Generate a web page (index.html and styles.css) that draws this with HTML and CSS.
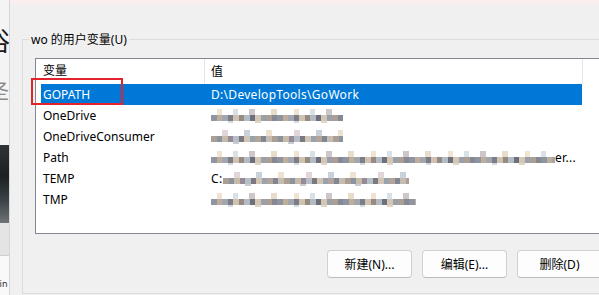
FILE: index.html
```html
<!DOCTYPE html>
<html lang="zh-CN">
<head>
  <meta charset="UTF-8">
  <title>环境变量</title>
  <link rel="stylesheet" href="styles.css">
</head>
<body>
  <div class="screen">

    <aside class="behind">
      <div class="behind-top">
        <span class="behind-big">俗</span>
        <span class="behind-gray">圣</span>
      </div>
      <div class="behind-photo"></div>
      <div class="behind-bar"></div>
      <div class="behind-foot">nin</div>
    </aside>

    <main class="dialog">
      <fieldset class="group">
        <legend>wo 的用户变量(U)</legend>

        <div class="list">
          <div class="list-head">
            <div class="col-name">变量</div>
            <div class="col-value">值</div>
          </div>

          <div class="row selected">
            <div class="col-name">GOPATH</div>
            <div class="col-value">D:\DevelopTools\GoWork</div>
          </div>
          <div class="row">
            <div class="col-name">OneDrive</div>
            <div class="col-value"><span class="mosaic m-short"></span></div>
          </div>
          <div class="row">
            <div class="col-name">OneDriveConsumer</div>
            <div class="col-value"><span class="mosaic m-short alt"></span></div>
          </div>
          <div class="row">
            <div class="col-name">Path</div>
            <div class="col-value"><span class="mosaic m-long"></span>er...</div>
          </div>
          <div class="row">
            <div class="col-name">TEMP</div>
            <div class="col-value">C:<span class="mosaic m-temp alt"></span></div>
          </div>
          <div class="row">
            <div class="col-name">TMP</div>
            <div class="col-value"><span class="mosaic m-tmp"></span></div>
          </div>
        </div>

        <div class="actions">
          <button class="btn">新建(N)...</button>
          <button class="btn">编辑(E)...</button>
          <button class="btn">删除(D)</button>
        </div>
      </fieldset>

      <!-- 红框标注 -->
      <div class="callout"></div>
    </main>

  </div>
</body>
</html>
```

FILE: styles.css
```css
body {
  margin: 0;
  width: 599px;
  height: 295px;
  overflow: hidden;
  font-family: "Noto Sans", "Noto Sans CJK SC", sans-serif;
  font-size: 12px;
  color: #000;
}

.screen {
  display: flex;
  height: 295px;
}

/* window behind the dialog */
.behind {
  width: 9px;
  flex-shrink: 0;
  border-right: 1px solid #d6d6d6;
  background-color: #f4f4f4;
  overflow: hidden;
  display: flex;
  flex-direction: column;
}

.behind-top {
  height: 145px;
}

.behind-big {
  display: block;
  margin: 26px 0 0 -16px;
  font-size: 26px;
  line-height: 30px;
  color: #1a1a1a;
}

.behind-gray {
  display: block;
  margin: 24px 0 0 -11px;
  font-size: 20px;
  line-height: 24px;
  color: #8a8a8a;
}

.behind-photo {
  height: 78px;
  background: linear-gradient(180deg, #2f3438 0%, #1b1f22 40%, #3b4146 70%, #6f7377 100%);
}

.behind-bar {
  height: 32px;
  background-color: #e4e4e4;
  border-bottom: 1px solid #cfcfcf;
}

.behind-foot {
  flex: 1;
  background-color: #f9f9f9;
  font-size: 9px;
  line-height: 12px;
  padding-top: 22px;
  margin-left: -6px;
  color: #333;
}

/* dialog */
.dialog {
  flex: 1;
  position: relative;
  background-color: #f0f0f0;
  border-top: 4px solid #fbeeee;
  padding: 27px 0 0 12px;
  overflow: hidden;
}

.group {
  width: 620px;
  margin: 0;
  padding: 0 0 15px 12px;
  border: 1px solid #dcdcdc;
  border-right: none;
}

.group legend {
  padding: 0 2px;
  margin-left: -6px;
  line-height: 17px;
}

.list {
  margin-top: 10px;
  width: 600px;
  height: 174px;
  background-color: #fff;
  border: 1px solid #828790;
  border-right: none;
  padding-left: 5px;
}

.list-head {
  display: flex;
  height: 25px;
  line-height: 24px;
}

.list-head .col-name,
.list-head .col-value {
  border-right: 1px solid #e5e5e5;
}

.row {
  display: flex;
  height: 21px;
  line-height: 21px;
}

.col-name {
  width: 161px;
  padding-left: 2px;
  white-space: nowrap;
}

.col-value {
  width: 371px;
  padding-left: 6px;
  white-space: nowrap;
  display: flex;
  align-items: center;
  letter-spacing: 0.3px;
}

.row .col-name {
  width: 162px;
}

.row.selected {
  width: 541px;
  background-color: #0078d7;
  color: #fff;
}

/* blurred values */
.mosaic {
  display: inline-block;
  height: 14px;
  margin-top: 1px;
  background:
    repeating-linear-gradient(90deg, #fff 0 6px, #efe3d2 6px 11px, #fff 11px 22px, #d8e0e8 22px 27px, #fff 27px 38px, #cfc6c9 38px 44px, #fff 44px 60px, #e8dccb 60px 66px, #fff 66px 77px) 0 0 / 100% 6px no-repeat,
    repeating-linear-gradient(90deg, #8e95a0 0 6px, #bfae9b 6px 11px, #a2a7af 11px 17px, #7d7d88 17px 22px, #cfc2b0 22px 28px, #978a80 28px 33px, #b2bbc4 33px 39px, #6d707a 39px 44px, #d4c6b4 44px 50px, #9aa0aa 50px 55px, #ab9e95 55px 61px, #868893 61px 66px) 0 6px / 100% 6px no-repeat,
    repeating-linear-gradient(90deg, #fff 0 17px, #d3dae1 17px 22px, #fff 22px 44px, #dfd5c9 44px 50px, #fff 50px 66px) 0 12px / 100% 2px no-repeat;
}

.mosaic.alt {
  background:
    repeating-linear-gradient(90deg, #fff 0 11px, #e2d6d9 11px 17px, #fff 17px 33px, #c9d1da 33px 39px, #fff 39px 55px, #ede2d2 55px 61px, #fff 61px 72px) 0 0 / 100% 6px no-repeat,
    repeating-linear-gradient(90deg, #aa9e95 0 6px, #8a939e 6px 11px, #c8baa9 11px 17px, #958a98 17px 22px, #b6bec6 22px 28px, #7b7882 28px 33px, #d1c5b5 33px 39px, #99a3ad 39px 44px, #b3a59b 44px 50px, #808792 50px 55px, #c6bdb2 55px 61px) 0 6px / 100% 6px no-repeat,
    repeating-linear-gradient(90deg, #fff 0 22px, #c6cdd5 22px 28px, #fff 28px 55px) 0 12px / 100% 2px no-repeat;
}

.m-short {
  width: 132px;
}

.m-long {
  width: 344px;
}

.m-temp {
  width: 186px;
  margin-left: 1px;
}

.m-tmp {
  width: 205px;
}

.actions {
  display: flex;
  gap: 10px;
  margin: 16px 0 0 292px;
}

.btn {
  width: 85px;
  height: 28px;
  padding: 0;
  background-color: #fdfdfd;
  border: 1px solid #d0d0d0;
  border-bottom-color: #bcbcbc;
  border-radius: 4px;
  font-family: inherit;
  font-size: 12px;
  color: #000;
}

.callout {
  position: absolute;
  left: 21px;
  top: 74px;
  width: 88px;
  height: 23px;
  border: 2px solid #e2232b;
}
```
